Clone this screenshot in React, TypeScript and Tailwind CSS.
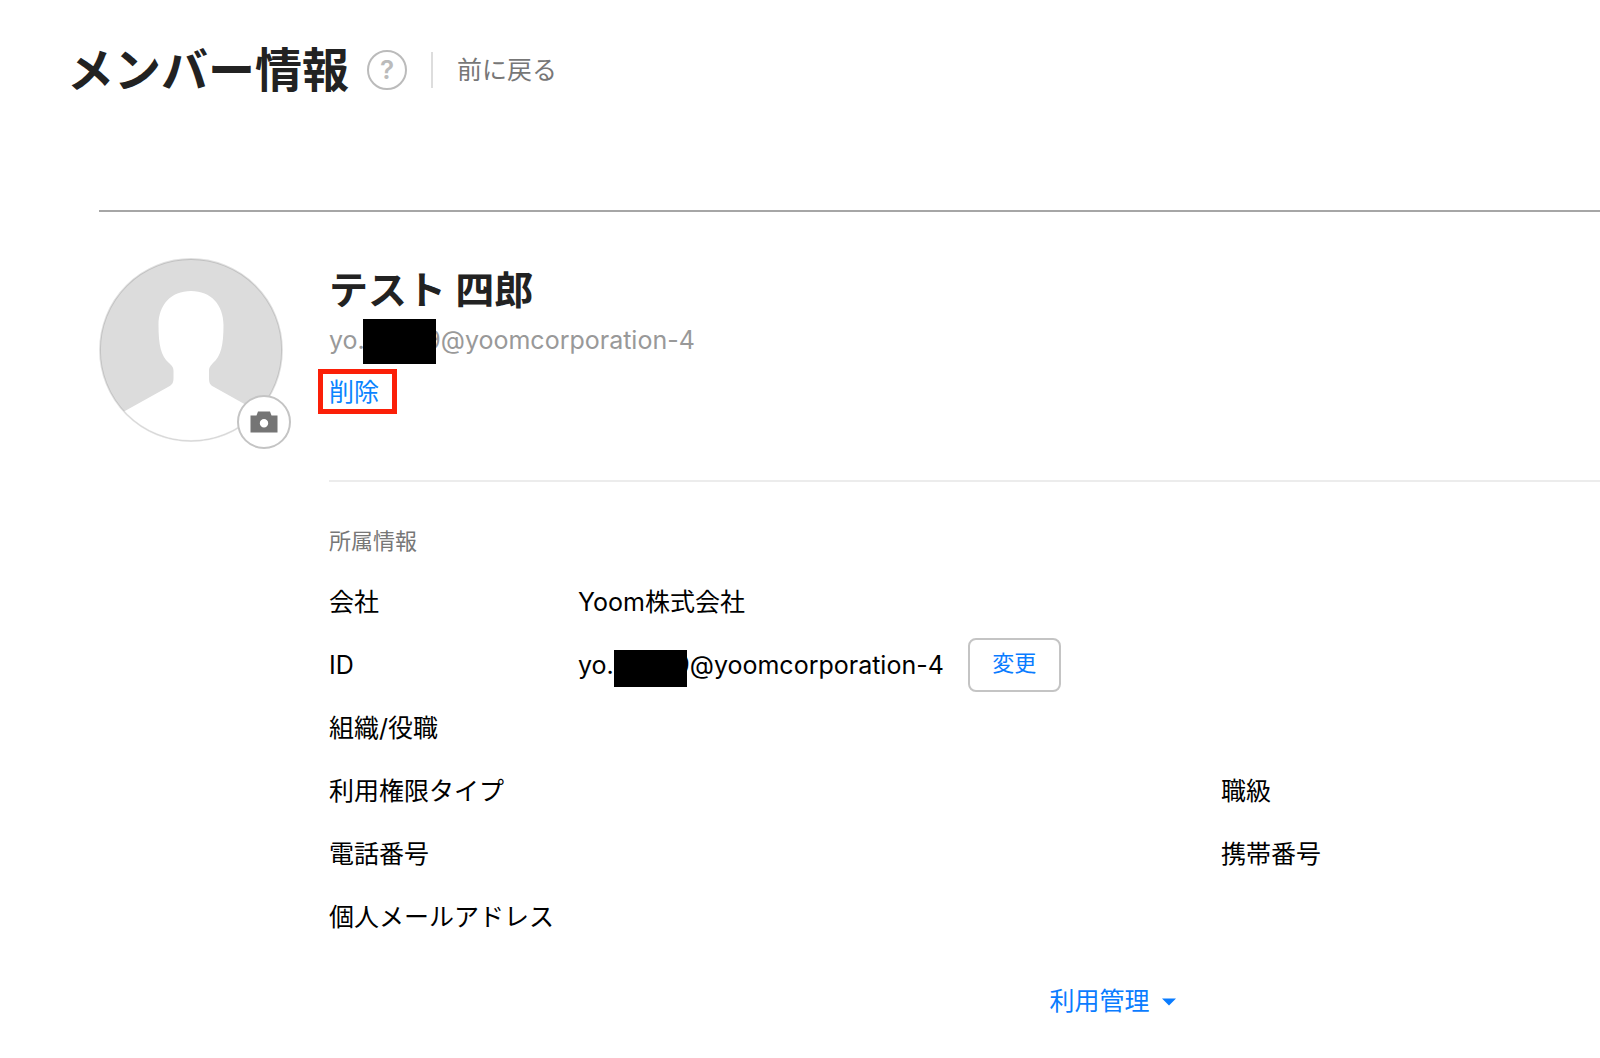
import type { ReactNode } from 'react';

interface Field {
  label: string;
  value?: ReactNode;
  subLabel?: string;
}

const fields: Field[] = [
  { label: '会社', value: 'Yoom株式会社' },
  {
    label: 'ID',
    value: (
      <>
        <MaskedId maskClassName="left-0 top-[3px] h-[37px]" />
        <button
          type="button"
          className="ml-6 h-[54px] w-[93px] rounded-lg border-2 border-[#c4c4c4] bg-white pb-1 text-[22px] leading-8 text-[#0a7cff]"
        >
          変更
        </button>
      </>
    ),
  },
  { label: '組織/役職' },
  { label: '利用権限タイプ', subLabel: '職級' },
  { label: '電話番号', subLabel: '携帯番号' },
  { label: '個人メールアドレス' },
];

export default function App() {
  return (
    <main
      lang="ja"
      className="min-h-screen overflow-hidden bg-white pb-10 font-['Inter','Noto_Sans_CJK_JP',sans-serif] text-[25px] leading-9 text-black"
    >
      <PageHeader />

      <div className="ml-[99px] mt-[104px] flex border-t-2 border-[#a6a6a6] pt-[46px]">
        <Avatar />
        <div className="ml-[46px] min-w-0 flex-1">
          <section className="h-[224px] border-b-2 border-[#ececec] pt-2">
            <h2 className="text-[39px] font-bold leading-[48px] text-[#222]">テスト 四郎</h2>
            <p className="mt-2 text-[#999]">
              <MaskedId maskClassName="-left-0.5 -top-[3px] h-[45px]" />
            </p>
            <a
              href="#delete"
              className="-ml-[11px] mt-[11px] flex h-[45px] w-[79px] items-center border-5 border-[#fb1f08] pl-1.5 text-[#0a84ff]"
            >
              削除
            </a>
          </section>

          <section className="pt-[41px]">
            <h3 className="text-[22px] leading-9 text-[#777]">所属情報</h3>
            <dl className="mt-[11px]">
              {fields.map((field) => (
                <FieldRow key={field.label} field={field} />
              ))}
            </dl>
          </section>

          <div className="mt-[35px] flex justify-center pl-[296px]">
            <button type="button" className="flex items-center gap-3 text-[#0a7cff]">
              利用管理
              <svg width="14" height="8" viewBox="0 0 14 8" className="mt-0.5" aria-hidden="true">
                <path d="M0 0.5h14L7 7.5z" fill="currentColor" />
              </svg>
            </button>
          </div>
        </div>
      </div>
    </main>
  );
}

function PageHeader() {
  return (
    <header className="flex items-center pl-[67px] pt-[33px]">
      <h1 className="text-[47px] font-bold leading-[73px] text-[#222]">メンバー情報</h1>
      <button
        type="button"
        aria-label="ヘルプ"
        className="ml-[18px] flex h-10 w-10 items-center justify-center rounded-full border-2 border-[#bbb] text-[26px] font-semibold leading-9 text-[#bbb]"
      >
        ?
      </button>
      <span className="ml-6 h-9 w-0.5 bg-[#ddd]" />
      <a href="#back" className="ml-6 text-[#777]">
        前に戻る
      </a>
    </header>
  );
}

function Avatar() {
  return (
    <div className="relative h-[184px] w-[184px] shrink-0">
      <svg width="184" height="184" viewBox="0 0 184 184" aria-hidden="true">
        <defs>
          <clipPath id="avatar-clip">
            <circle cx="92" cy="92" r="91" />
          </clipPath>
        </defs>
        <g clipPath="url(#avatar-clip)">
          <rect width="184" height="184" fill="#dcdcdc" />
          <path
            d="M92 33C72 33 59.500 47 59.500 67C59.500 87 62 98 70 105C73 108 74.500 109 74.500 113V120C74.500 125 73 127 69 129L25 153.500L20 190H164L159 153.500L115 129C111 127 110 125 110 120V113C110 109 111.500 108 114 105C122 98 124.500 87 124.500 67C124.500 47 112 33 92 33Z"
            fill="#fff"
          />
        </g>
        <circle cx="92" cy="92" r="91" fill="none" stroke="#000" strokeOpacity="0.12" strokeWidth="1.8" />
      </svg>
      <button
        type="button"
        aria-label="写真を変更"
        className="absolute -bottom-[7px] -right-2 flex h-[54px] w-[54px] items-center justify-center rounded-full border-2 border-[#c4c4c4] bg-white"
      >
        <svg width="28" height="22" viewBox="0 0 28 22" aria-hidden="true">
          <path
            fillRule="evenodd"
            d="M8 0.500h12l1.500 4h6v17h-27v-17h6zM14 8a4.200 4.200 0 1 0 0 8.400a4.200 4.200 0 0 0 0-8.400z"
            fill="#757575"
          />
        </svg>
      </button>
    </div>
  );
}

// Login ID with the personal part blacked out
function MaskedId({ maskClassName }: { maskClassName: string }) {
  return (
    <span className="inline-flex whitespace-nowrap">
      yo.
      <span className="relative w-[76px] text-right">
        9
        <span className={`absolute w-[73px] bg-black ${maskClassName}`} />
      </span>
      @yoomcorporation-4
    </span>
  );
}

function FieldRow({ field }: { field: Field }) {
  return (
    <div className="grid h-[63px] grid-cols-[249px_643fr_379fr] items-center">
      <dt>{field.label}</dt>
      <dd className="flex items-center">{field.value}</dd>
      {field.subLabel && <dt>{field.subLabel}</dt>}
    </div>
  );
}
